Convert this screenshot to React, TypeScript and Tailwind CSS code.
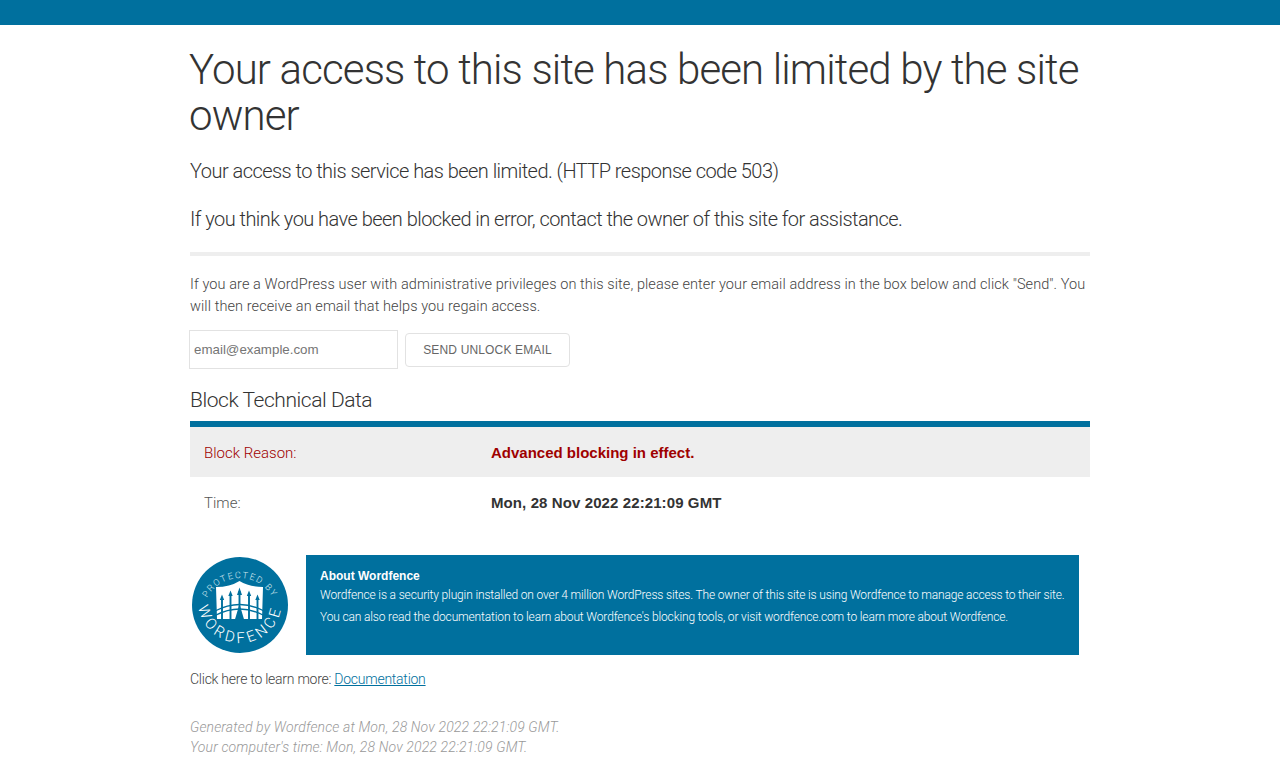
import React from 'react';

const light = "font-['Roboto',Arial,sans-serif] font-light";
const regular = "font-['Liberation_Sans',Arial,sans-serif]";

function WordfenceBadge() {
  return (
    <svg viewBox="0 0 100 100" className="h-[100px] w-[100px] shrink-0">
      <circle cx="50" cy="50" r="48" fill="#00709e" />
      <defs>
        <path id="badge-top" d="M 13 60 A 37 37 0 1 1 87 60" />
        <path id="badge-bottom" d="M 8 46 A 42 42 0 0 0 92 46" />
      </defs>
      <text fontSize="9" fill="#d5e8ef" letterSpacing="1.5" fontFamily="Roboto, Arial, sans-serif" fontWeight="300">
        <textPath href="#badge-top" startOffset="50%" textAnchor="middle">PROTECTED BY</textPath>
      </text>
      <text fontSize="15" fill="#ffffff" letterSpacing="3.4" fontFamily="Roboto, Arial, sans-serif">
        <textPath href="#badge-bottom" startOffset="50%" textAnchor="middle">WORDFENCE</textPath>
      </text>
      {/* gate */}
      <path d="M26 32 Q40 32 49.5 26 Q59 32 73 32 L72 64 H27 Z" fill="#ffffff" />
      <path d="M32 66 V43 M40.5 66 V39 M49.5 66 V36 M59 66 V39 M67.5 66 V43" stroke="#00709e" strokeWidth="1.9" fill="none" />
      <path d="M49.5 32.5 L47 40 H52 Z M40.5 35.5 L38.3 41 H42.7 Z M59 35.5 L56.8 41 H61.2 Z M32 39.5 L29.8 45 H34.2 Z M67.5 39.5 L65.3 45 H69.7 Z" fill="#00709e" />
      <path d="M25 56 Q50 43 74 56 M25 60.5 Q50 47.5 74 60.5" stroke="#00709e" strokeWidth="1.4" fill="none" />
      <path d="M44.5 66 L49.5 49 L54.5 66 Z" fill="#00709e" />
    </svg>
  );
}

export default function App() {
  return (
    <div className={`min-h-[771px] bg-white ${light} text-[#333]`}>
      {/* Top bar */}
      <div className="h-[25px] bg-[#00709e]" />

      <div className="mx-auto w-[900px] pt-[22px]">
        <h1 className="-ml-px text-[42px] leading-[46px] font-light tracking-[-0.86px] text-[#333]">
          Your access to this site has been limited by the site owner
        </h1>

        <p className="mt-[19px] text-[20px] leading-[26px] tracking-[-0.54px] text-[#333]">
          Your access to this service has been limited. (HTTP response code 503)
        </p>
        <p className="mt-[22px] text-[20px] leading-[26px] tracking-[-0.54px] text-[#333]">
          If you think you have been blocked in error, contact the owner of this site for assistance.
        </p>

        <div className="mt-[20px] h-1 bg-[#eeeeee]" />

        <p className="mt-[18px] text-[14.5px] leading-[22px] tracking-[0.085px] text-[#444]">
          If you are a WordPress user with administrative privileges on this site, please enter your email address in the box below and click "Send". You will then receive an email that helps you regain access.
        </p>

        {/* Unlock form */}
        <form className="-ml-px mt-[12px] flex items-center">
          <input
            type="text"
            placeholder="email@example.com"
            className={`h-[39px] w-[209px] border border-[#e2e2e2] bg-white px-[4px] ${regular} text-[13.33px] font-normal text-[#555] outline-none placeholder:text-[#757575]`}
          />
          <button
            type="button"
            className={`ml-[7px] h-[34px] w-[165px] rounded-[4px] border border-[#e2e2e2] bg-white ${regular} text-[12px] leading-none font-normal tracking-[0.15px] text-[#666]`}
          >
            SEND UNLOCK EMAIL
          </button>
        </form>

        <h2 className="mt-[18px] text-[21px] leading-[26px] font-light tracking-[-0.45px] text-[#333]">Block Technical Data</h2>

        {/* Data table */}
        <div className="mt-[8px] border-t-[6px] border-[#00709e]">
          <div className="flex h-[50px] items-center bg-[#eeeeee] pt-[2px] text-[15px]">
            <div className="w-[301px] pl-[14px] text-[#9f0000]">Block Reason:</div>
            <div className={`${regular} font-bold text-[#9f0000]`}>Advanced blocking in effect.</div>
          </div>
          <div className="flex h-[52px] items-center text-[15px]">
            <div className="w-[301px] pl-[14px] text-[#555]">Time:</div>
            <div className={`${regular} font-bold tracking-[0.1px] text-[#333]`}>Mon, 28 Nov 2022 22:21:09 GMT</div>
          </div>
        </div>

        {/* About banner */}
        <div className="mt-[26px] flex items-start gap-[16px]">
          <WordfenceBadge />
          <div className="h-[100px] w-[773px] bg-[#00709e] px-[14px] pt-[12px] text-[12px] leading-[20.5px] font-light tracking-[-0.15px] text-white">
            <div className={`${regular} leading-[18px] font-bold tracking-normal`}>About Wordfence</div>
            <p>Wordfence is a security plugin installed on over 4 million WordPress sites. The owner of this site is using Wordfence to manage access to their site.</p>
            <p className="mt-[1px]">You can also read the documentation to learn about Wordfence's blocking tools, or visit wordfence.com to learn more about Wordfence.</p>
          </div>
        </div>

        <p className="mt-[13px] text-[14px] leading-[22px] tracking-[-0.25px] text-[#444]">
          Click here to learn more: <a href="#" className="text-[#00709e] underline">Documentation</a>
        </p>

        <p className="mt-[27px] text-[14px] leading-[20px] tracking-[0.14px] text-[#999] italic">
          Generated by Wordfence at Mon, 28 Nov 2022 22:21:09 GMT.
          <br />
          Your computer's time: Mon, 28 Nov 2022 22:21:09 GMT.
        </p>
      </div>
    </div>
  );
}
